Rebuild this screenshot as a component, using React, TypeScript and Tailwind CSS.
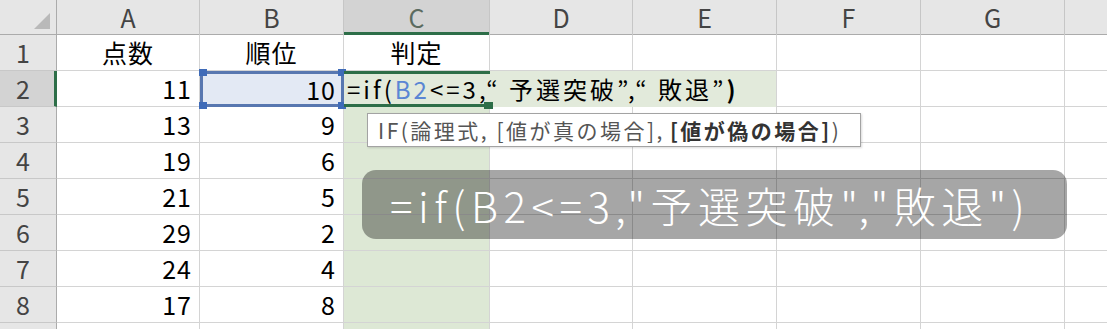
import React from "react";

const cols = [
  { key: "A", w: "w-[143px]" },
  { key: "B", w: "w-[144px]" },
  { key: "C", w: "w-[146px]" },
  { key: "D", w: "w-[143px]" },
  { key: "E", w: "w-[144px]" },
  { key: "F", w: "w-[144px]" },
  { key: "G", w: "w-[144px]" },
  { key: "", w: "w-[60px]" },
];

const data: string[][] = [
  ["点数", "順位", "判定"],
  ["11", "10"],
  ["13", "9"],
  ["19", "6"],
  ["21", "5"],
  ["29", "2"],
  ["24", "4"],
  ["17", "8"],
  [],
];

const font = "font-['Noto_Sans_CJK_JP','Liberation_Sans',sans-serif]";

const Handle: React.FC<{ pos: string }> = ({ pos }) => (
  <div className={`absolute ${pos} w-[8px] h-[7px] bg-[#3f6bb8]`} />
);

const App: React.FC = () => {
  const cellClass = (row: number, col: number) => {
    // B2: cell referenced by the formula
    if (row === 2 && col === 1)
      return "relative bg-[#e3e9f4] border-[3px] border-[#5877b0] justify-end pr-[5px]";
    // C2: cell being edited
    if (row === 2 && col === 2)
      return "relative z-10 bg-[#e2eadb] border-y-[3px] border-[#2d6e48] justify-start pl-[3px]";
    if (row === 2 && col === 3) return "bg-[#e2eadb]";
    if (row === 2 && col === 4) return "bg-[#e2eadb] border-r border-[#d4d4d4]";
    const bg = col === 2 && row >= 2 ? "bg-[#dde8d5]" : "bg-white";
    const align = row === 1 ? "justify-center" : "justify-end pr-[7px]";
    return `${bg} ${align} border-r border-b border-[#d4d4d4]`;
  };

  return (
    <div className={`relative w-[1107px] h-[329px] overflow-hidden bg-white ${font}`}>
      {/* column headers */}
      <div className="flex h-[35px]">
        <div className="relative w-[57px] shrink-0 bg-[#e6e6e6] border-r border-b border-[#ababab]">
          <div className="absolute right-[6px] bottom-[5px] w-0 h-0 border-l-[16px] border-l-transparent border-b-[16px] border-b-[#b9b9b9]" />
        </div>
        {cols.map((c, i) => (
          <div
            key={i}
            className={`${c.w} shrink-0 flex items-center justify-center text-[25px] leading-none border-r border-r-[#c6c6c6] ${
              i === 2
                ? "bg-[#d3d3d3] text-[#5c6b60] shadow-[inset_0_-3px_0_#2d6e48]"
                : "bg-[#e6e6e6] text-[#444] shadow-[inset_0_-1px_0_#ababab]"
            }`}
          >
            {c.key}
          </div>
        ))}
      </div>

      {/* rows */}
      {data.map((row, ri) => {
        const rowNo = ri + 1;
        return (
          <div key={ri} className="flex h-[36px]">
            <div
              className={`w-[57px] shrink-0 flex items-center pl-[16px] text-[25px] leading-none text-[#444] border-b border-b-[#c8c8c8] ${
                rowNo === 2
                  ? "bg-[#d3d3d3] border-r-[3px] border-r-[#2d6e48]"
                  : "bg-[#e6e6e6] border-r border-r-[#ababab]"
              }`}
            >
              {rowNo < 9 ? rowNo : ""}
            </div>
            {cols.map((c, ci) => (
              <div
                key={ci}
                className={`${c.w} shrink-0 flex items-center text-[25px] leading-none tracking-[1px] text-black ${cellClass(
                  rowNo,
                  ci
                )}`}
              >
                {rowNo === 2 && ci === 1 && (
                  <>
                    <Handle pos="-left-[4px] -top-[5px]" />
                    <Handle pos="-right-[5px] -top-[5px]" />
                    <Handle pos="-left-[4px] -bottom-[5px]" />
                    <Handle pos="-right-[5px] -bottom-[5px]" />
                  </>
                )}
                {rowNo === 2 && ci === 2 ? (
                  <>
                    <span className="whitespace-nowrap text-[24px] tracking-[3px]">
                      =if(<span className="text-[#5a86d4]">B2</span>&lt;=3,“ 予選突破”,“ 敗退”
                      <span className="font-bold">)</span>
                    </span>
                    <div className="absolute -right-[3px] -bottom-[5px] w-[9px] h-[7px] bg-[#2d6e48]" />
                  </>
                ) : (
                  row[ci] ?? ""
                )}
              </div>
            ))}
          </div>
        );
      })}

      {/* function tooltip */}
      <div className="absolute left-[367px] top-[113px] z-20 w-[494px] h-[34px] bg-white border border-[#a3a3a3] shadow-[1px_1px_2px_rgba(0,0,0,0.15)] flex items-center gap-[5px] pl-[10px] text-[21px] leading-none tracking-[2.5px] text-[#555] whitespace-nowrap">
        <span>IF(論理式, [値が真の場合],</span>
        <span>
          <span className="font-bold text-[#333]">[値が偽の場合]</span>)
        </span>
      </div>

      {/* caption */}
      <div className="absolute left-[362px] top-[170px] z-20 w-[705px] h-[69px] rounded-[14px] bg-black/35 flex items-center pl-[28px] text-[42px] font-light leading-none tracking-[5.5px] text-white whitespace-nowrap">
        =if(B2&lt;=3,"予選突破","敗退")
      </div>
    </div>
  );
};

export default App;
